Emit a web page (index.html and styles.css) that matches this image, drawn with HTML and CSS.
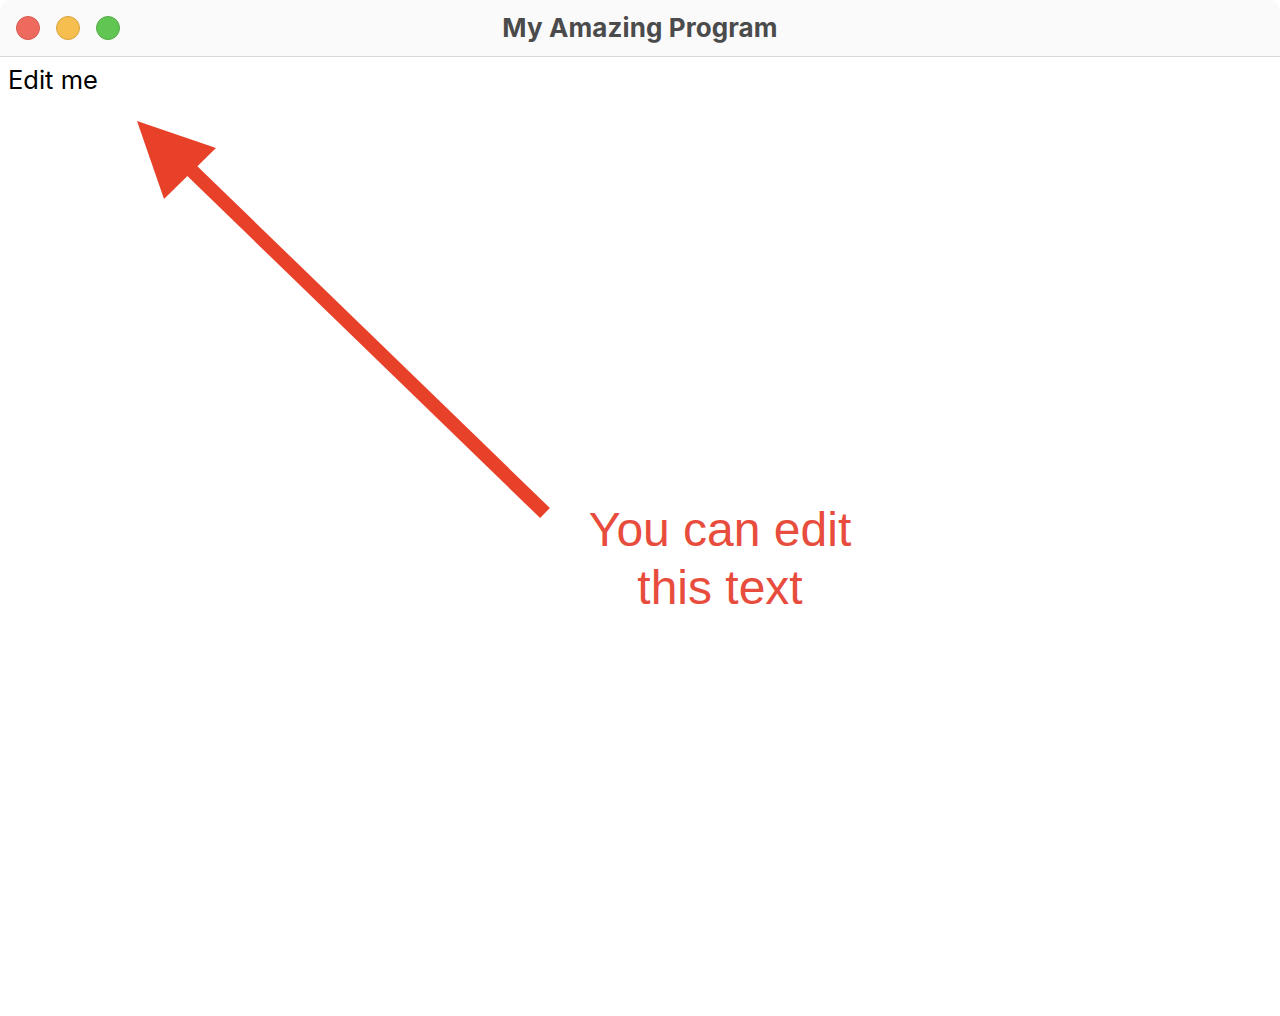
FILE: index.html
```html
<!DOCTYPE html>
<html>
<head>
<meta charset="utf-8">
<title>My Amazing Program</title>
<link rel="stylesheet" href="styles.css">
</head>
<body>
<div class="window">
  <header class="titlebar">
    <div class="lights">
      <span class="light red"></span>
      <span class="light yellow"></span>
      <span class="light green"></span>
    </div>
    <div class="title">My Amazing Program</div>
  </header>
  <main class="content">
    <div class="editable" contenteditable="true">Edit me</div>
    <svg class="arrow" width="1280" height="960" viewBox="0 0 1280 960">
      <line x1="545" y1="457" x2="185" y2="108" stroke="#e8412a" stroke-width="14"/>
      <polygon points="137,65 216,92 164,143" fill="#e8412a"/>
    </svg>
    <div class="note">You can edit<br>this text</div>
  </main>
</div>
</body>
</html>
```
FILE: styles.css
```css
html, body {
  margin: 0;
  padding: 0;
  background: #ffffff;
}
.window {
  width: 1280px;
  height: 1016px;
  display: flex;
  flex-direction: column;
  font-family: Inter, "Noto Sans", sans-serif;
}
.titlebar {
  height: 57px;
  flex: 0 0 57px;
  box-sizing: border-box;
  border-bottom: 1px solid #d8d8d8;
  background: #fafafa;
  display: flex;
  align-items: center;
  position: relative;
  border-top-left-radius: 10px;
  border-top-right-radius: 10px;
}
.lights {
  display: flex;
  gap: 16px;
  padding-left: 16px;
  position: relative;
  z-index: 1;
}
.light {
  width: 24px;
  height: 24px;
  border-radius: 50%;
  box-sizing: border-box;
}
.red { background: #ee6a5f; border: 1px solid #d65a4f; }
.yellow { background: #f5be4f; border: 1px solid #d9a23f; }
.green { background: #61c554; border: 1px solid #52ad45; }
.title {
  position: absolute;
  left: 0;
  right: 0;
  top: 0;
  bottom: 1px;
  display: flex;
  align-items: center;
  justify-content: center;
  font-size: 26px;
  font-weight: 700;
  color: #4b4b4b;
  letter-spacing: 0.1px;
}
.content {
  flex: 1;
  position: relative;
}
.editable {
  padding: 8px 8px 0 8px;
  font-size: 25.5px;
  line-height: 30px;
  color: #000;
  outline: none;
}
.arrow {
  position: absolute;
  left: 0;
  top: -1px;
  pointer-events: none;
}
.note {
  position: absolute;
  left: 520px;
  top: 444px;
  width: 400px;
  text-align: center;
  font-family: "Liberation Sans", Arial, sans-serif;
  font-size: 48px;
  line-height: 58px;
  color: #e84c3d;
}
```
